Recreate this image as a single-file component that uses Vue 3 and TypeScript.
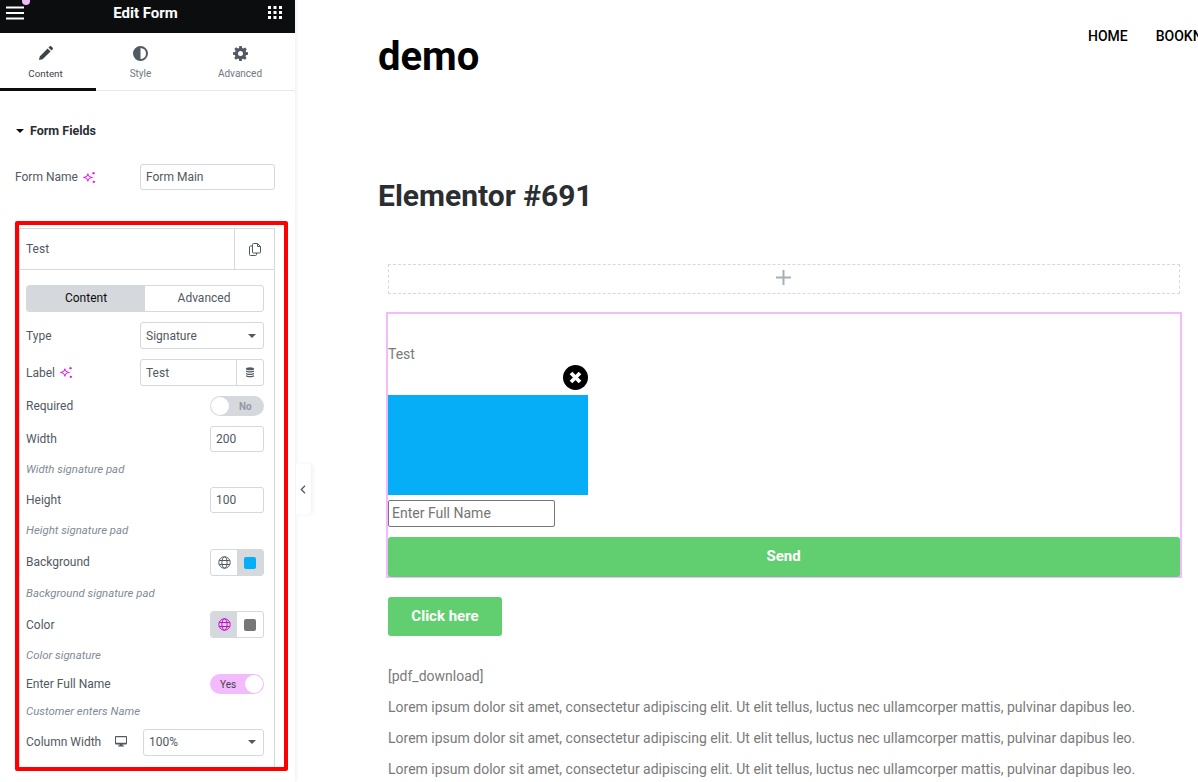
<script setup lang="ts">
const lorem = 'Lorem ipsum dolor sit amet, consectetur adipiscing elit. Ut elit tellus, luctus nec ullamcorper mattis, pulvinar dapibus leo.'
const lines: number[] = [1, 2, 3]
</script>

<template>
  <div class="app">
    <aside class="panel">
      <header class="top">
        <svg class="burger" width="18" height="14" viewBox="0 0 18 14"><path d="M0 1.500h18M0 7h18M0 12.500h18" stroke="#fff" stroke-width="2" /></svg>
        <span class="dot"></span>
        <span class="top-title">Edit Form</span>
        <svg class="grid-ic" width="14" height="13" viewBox="0 0 14 13" fill="#fff">
          <rect x="0" y="0" width="3" height="3" /><rect x="5.500" y="0" width="3" height="3" /><rect x="11" y="0" width="3" height="3" />
          <rect x="0" y="5" width="3" height="3" /><rect x="5.500" y="5" width="3" height="3" /><rect x="11" y="5" width="3" height="3" />
          <rect x="0" y="10" width="3" height="3" /><rect x="5.500" y="10" width="3" height="3" /><rect x="11" y="10" width="3" height="3" />
        </svg>
      </header>

      <nav class="tabs">
        <div class="tab tab-content active">
          <svg width="14" height="14" viewBox="0 0 14 14" fill="#3f444b"><path d="M0 14l.7-3.600L8.600 2.500l3 3L3.600 13.300zM9.500 1.600L10.800.3c.4-.4 1-.4 1.400 0l1.500 1.500c.4.4.4 1 0 1.400l-1.300 1.300z" /></svg>
          <span>Content</span>
        </div>
        <div class="tab tab-style">
          <svg width="15" height="15" viewBox="0 0 15 15"><circle cx="7.500" cy="7.500" r="6.500" fill="none" stroke="#515962" stroke-width="2" /><path d="M7.500 1a6.500 6.500 0 0 0 0 13z" fill="#515962" /></svg>
          <span>Style</span>
        </div>
        <div class="tab tab-adv">
          <svg width="15" height="15" viewBox="0 0 24 24" fill="#515962"><path fill-rule="evenodd" d="M10 0h4l.6 3.300 1.900.8 2.800-1.900 2.800 2.800-1.900 2.800.8 1.900L24 10v4l-3.300.6-.8 1.900 1.900 2.800-2.800 2.800-2.800-1.900-1.900.8L14 24h-4l-.6-3.300-1.900-.8-2.800 1.900-2.800-2.800 1.900-2.800-.8-1.900L0 14v-4l3.300-.6.8-1.900-1.900-2.800 2.800-2.800 2.800 1.900 1.900-.8zM12 8a4 4 0 1 0 0 8 4 4 0 0 0 0-8z" /></svg>
          <span>Advanced</span>
        </div>
      </nav>

      <section class="section">
        <h3 class="section-title"><span class="caret dark"></span>Form Fields</h3>
        <div class="form-name">
          <label class="lbl">Form Name
            <svg class="magic" width="13" height="13" viewBox="0 0 12 12"><path d="M4.500 2.500C4.900 4.800 5.400 5.300 8 6 5.400 6.700 4.900 7.200 4.500 9.500 4.100 7.200 3.600 6.700 1 6 3.600 5.300 4.100 4.800 4.500 2.500z" fill="none" stroke="#e01ff0" stroke-width="1" /><circle cx="9.700" cy="2" r="1.100" fill="#e01ff0" /><circle cx="10" cy="10" r="1.100" fill="#e01ff0" /></svg>
          </label>
          <div class="input name-input">Form Main</div>
        </div>

        <div class="highlight">
          <div class="repeater">
            <div class="rep-head">
              <span class="rep-title">Test</span>
              <span class="rep-copy">
                <svg width="12" height="13" viewBox="0 0 12 13" fill="none" stroke="#515962" stroke-width="1"><path d="M3.500 3H1.500a1 1 0 0 0-1 1v7.500a1 1 0 0 0 1 1h5a1 1 0 0 0 1-1V10" /><path d="M3.500 1.500a1 1 0 0 1 1-1h4l3 3v5.500a1 1 0 0 1-1 1h-6a1 1 0 0 1-1-1z" /><path d="M8.500.5v3h3" /></svg>
              </span>
            </div>
            <div class="rep-body">
              <div class="switch">
                <span class="switch-btn on">Content</span>
                <span class="switch-btn">Advanced</span>
              </div>

              <div class="row">
                <span class="lbl">Type</span>
                <div class="input select sel-type">Signature<span class="caret"></span></div>
              </div>

              <div class="row">
                <label class="lbl">Label
                  <svg class="magic" width="13" height="13" viewBox="0 0 12 12"><path d="M4.500 2.500C4.900 4.800 5.400 5.300 8 6 5.400 6.700 4.900 7.200 4.500 9.500 4.100 7.200 3.600 6.700 1 6 3.600 5.300 4.100 4.800 4.500 2.500z" fill="none" stroke="#e01ff0" stroke-width="1" /><circle cx="9.700" cy="2" r="1.100" fill="#e01ff0" /><circle cx="10" cy="10" r="1.100" fill="#e01ff0" /></svg>
                </label>
                <div class="label-group">
                  <span class="label-text">Test</span>
                  <span class="label-db">
                    <svg width="10" height="11" viewBox="0 0 10 11" fill="#515962"><ellipse cx="5" cy="1.700" rx="4" ry="1.500" /><path d="M1 3.500c1.500 1 6.500 1 8 0v1.300c-1.500 1-6.500 1-8 0zM1 6c1.500 1 6.500 1 8 0v1.300c-1.500 1-6.500 1-8 0zM1 8.300c1.500 1 6.500 1 8 0v.9c-1 1.400-7 1.400-8 0z" /></svg>
                  </span>
                </div>
              </div>

              <div class="row row-toggle">
                <span class="lbl">Required</span>
                <div class="toggle off"><span class="knob"></span><span class="toggle-txt">No</span></div>
              </div>

              <div class="row row-num">
                <span class="lbl">Width</span>
                <div class="input num">200</div>
              </div>
              <p class="desc after-1">Width signature pad</p>

              <div class="row row-num">
                <span class="lbl">Height</span>
                <div class="input num">100</div>
              </div>
              <p class="desc after-2">Height signature pad</p>

              <div class="row">
                <span class="lbl lift">Background</span>
                <div class="choice">
                  <span class="choice-btn">
                    <svg width="13" height="13" viewBox="0 0 13 13" fill="none" stroke="#515962" stroke-width="1"><circle cx="6.500" cy="6.500" r="5.700" /><ellipse cx="6.500" cy="6.500" rx="2.600" ry="5.700" /><path d="M1.200 4.500h10.600M1.200 8.500h10.600" /></svg>
                  </span>
                  <span class="choice-btn sel"><span class="swatch blue"></span></span>
                </div>
              </div>
              <p class="desc after-1">Background signature pad</p>

              <div class="row">
                <span class="lbl">Color</span>
                <div class="choice">
                  <span class="choice-btn sel">
                    <svg width="13" height="13" viewBox="0 0 13 13" fill="none" stroke="#d004d4" stroke-width="1"><circle cx="6.500" cy="6.500" r="5.700" /><ellipse cx="6.500" cy="6.500" rx="2.600" ry="5.700" /><path d="M1.200 4.500h10.600M1.200 8.500h10.600" /></svg>
                  </span>
                  <span class="choice-btn"><span class="swatch grey"></span></span>
                </div>
              </div>
              <p class="desc after-2">Color signature</p>

              <div class="row row-toggle">
                <span class="lbl">Enter Full Name</span>
                <div class="toggle on"><span class="toggle-txt">Yes</span><span class="knob"></span></div>
              </div>
              <p class="desc after-1">Customer enters Name</p>

              <div class="row">
                <span class="lbl lbl-col lift">Column Width
                  <svg width="12" height="11" viewBox="0 0 12 11" fill="#515962"><path fill-rule="evenodd" d="M1 0h10a1 1 0 0 1 1 1v6.500a1 1 0 0 1-1 1H7.500v1H9v1H3v-1h1.500v-1H1a1 1 0 0 1-1-1V1a1 1 0 0 1 1-1zm0 1.200v5.600h10V1.200z" /></svg>
                </span>
                <div class="input select sel-col">100%<span class="caret"></span></div>
              </div>
            </div>
          </div>
        </div>
      </section>
    </aside>

    <div class="collapse">
      <svg width="6" height="9" viewBox="0 0 6 9" fill="none" stroke="#515962" stroke-width="1.300"><path d="M5 .8L1.300 4.500 5 8.200" /></svg>
    </div>

    <main class="page">
      <div class="site-head">
        <div class="logo">demo</div>
        <div class="site-nav"><span>HOME</span><span>BOOKNOW</span></div>
      </div>
      <h1 class="page-title">Elementor #691</h1>

      <div class="content">
        <div class="add-zone">
          <svg width="15" height="15" viewBox="0 0 15 15"><path d="M7.500 0v15M0 7.500h15" stroke="#a4afb7" stroke-width="2" /></svg>
        </div>

        <div class="form-widget">
          <div class="f-label">Test</div>
          <div class="pad-close">
            <svg width="25" height="25" viewBox="0 0 25 25"><circle cx="12.500" cy="12.500" r="12.500" fill="#000" /><path d="M8 8l9 9M17 8l-9 9" stroke="#fff" stroke-width="3.800" /></svg>
          </div>
          <div class="pad"></div>
          <div class="full-name">Enter Full Name</div>
          <button class="send" type="button">Send</button>
        </div>

        <button class="click" type="button">Click here</button>

        <p class="para first">[pdf_download]</p>
        <p v-for="n in lines" :key="n" class="para">{{ lorem }}</p>
      </div>
    </main>
  </div>
</template>

<style>
html, body { margin: 0; height: 100%; overflow: hidden; background: #fff; }
</style>

<style scoped>
* { box-sizing: border-box; }
.app { display: flex; width: 1198px; height: 782px; overflow: hidden; position: relative; font-family: Roboto, "Liberation Sans", sans-serif; background: #fff; }
.panel { width: 295px; flex: none; height: 782px; overflow: hidden; background: #fff; box-shadow: 1px 0 4px rgba(0,0,0,.07); position: relative; }
.top { height: 33px; background: #0c0d0e; display: flex; align-items: center; justify-content: center; position: relative; }
.top-title { color: #fff; font-size: 15px; font-weight: 700; margin-top: -8px; margin-left: -4px; }
.burger { position: absolute; left: 6px; top: 6px; }
.dot { position: absolute; left: 22px; top: -3px; width: 8px; height: 8px; border-radius: 50%; background: #f0b9f9; }
.grid-ic { position: absolute; left: 268px; top: 6px; }
.tabs { height: 58px; display: flex; border-bottom: 1px solid #e6e8ea; }
.tab { display: flex; flex-direction: column; align-items: center; padding-top: 13px; gap: 6px; font-size: 10px; color: #6d7882; height: 58px; }
.tab span { line-height: 14px; }
.tab-content { width: 96px; color: #3f444b; padding-right: 5px; font-size: 9.800px; gap: 7px; }
.tab-style { width: 89px; }
.tab-adv { width: 110px; }
.tab.active { border-bottom: 3px solid #0c0d0e; }
.section { padding-left: 15px; }
.section-title { margin: 0; padding-top: 32px; height: 73px; font-size: 12.500px; font-weight: 700; color: #2b2e33; display: flex; align-items: flex-start; line-height: 15px; gap: 6px; padding-left: 1px; }
.section-title .caret { margin-top: 6px; }
.caret { width: 0; height: 0; border-left: 4px solid transparent; border-right: 4px solid transparent; border-top: 4px solid #515962; display: inline-block; }
.caret.dark { border-top-color: #0c0d0e; }
.form-name { display: flex; align-items: center; justify-content: space-between; width: 260px; height: 26px; }
.lbl { font-size: 12px; color: #515962; display: inline-flex; align-items: center; gap: 5px; }
.lift { padding-bottom: 2px; }
.lbl-col { gap: 14px; }
.input { border: 1px solid #d5d8dc; border-radius: 3px; font-size: 12px; color: #515962; display: flex; align-items: center; padding-left: 5px; background: #fff; }
.name-input { width: 135px; height: 26px; }
.highlight { margin-top: 31px; width: 273px; height: 550px; border: 4px solid #ff0000; border-radius: 2px; padding-top: 3px; overflow: hidden; }
.repeater { width: 256px; height: 540px; border: 1px solid #d5d8dc; border-bottom: 1px solid #c9ccd0; }
.rep-head { height: 41px; display: flex; border-bottom: 1px solid #d5d8dc; }
.rep-title { flex: 1; font-size: 12px; color: #515962; padding-left: 6px; line-height: 40px; }
.rep-copy { width: 40px; border-left: 1px solid #d5d8dc; display: flex; align-items: center; justify-content: center; }
.rep-body { padding: 15px 10px 0 6px; display: flex; flex-direction: column; gap: 10px; }
.switch { display: flex; height: 27px; border: 1px solid #d5d8dc; border-radius: 3px; overflow: hidden; font-size: 12px; color: #515962; line-height: 25px; }
.switch-btn { flex: 1; text-align: center; }
.switch-btn.on { background: #d5d8dc; color: #0c0d0e; flex: none; width: 118px; }
.row { display: flex; align-items: center; justify-content: space-between; height: 27px; }
.row-toggle { height: 20px; }
.row-num { height: 26px; }
.select { height: 27px; justify-content: space-between; padding-right: 7px; }
.sel-type { width: 124px; padding-left: 5px; }
.sel-col { width: 121px; padding-left: 5px; padding-bottom: 2px; }
.label-group { width: 124px; height: 27px; display: flex; border: 1px solid #d5d8dc; border-radius: 3px; font-size: 12px; color: #515962; }
.label-text { flex: 1; padding-left: 5px; line-height: 26px; }
.label-db { width: 27px; border-left: 1px solid #d5d8dc; display: flex; align-items: center; justify-content: center; }
.toggle { width: 54px; height: 20px; border-radius: 10px; display: flex; align-items: center; font-size: 10px; position: relative; }
.toggle.off { background: #d5d8dc; color: #9299a3; }
.toggle.off .toggle-txt { margin-left: 9px; font-weight: 700; }
.toggle.on { background: #f3bafd; color: #3f444b; justify-content: space-between; padding-left: 10px; }
.knob { width: 18px; height: 18px; margin: 0 1px; background: #fff; border-radius: 50%; display: block; }
.num { width: 54px; height: 26px; }
.desc { margin: 0; height: 14px; font-size: 11.400px; line-height: 14px; font-style: italic; color: #818a96; }
.after-1 { margin-bottom: 1px; }
.after-2 { margin-bottom: 2px; }
.choice { display: flex; width: 54px; height: 27px; border: 1px solid #d5d8dc; border-radius: 3px; overflow: hidden; }
.choice-btn { flex: 1; display: flex; align-items: center; justify-content: center; }
.choice-btn.sel { background: #d5d8dc; }
.swatch { width: 12px; height: 12px; border-radius: 2px; display: block; }
.swatch.blue { background: #06aef8; }
.swatch.grey { background: #777; }
.collapse { position: absolute; left: 296px; top: 464px; width: 15px; height: 50px; background: #fff; box-shadow: 2px 0 4px rgba(0,0,0,.06); display: flex; align-items: center; justify-content: center; border-radius: 0 3px 3px 0; padding-right: 2px; }
.page { flex: 1; min-width: 0; overflow: hidden; padding-left: 83px; }
.site-head { display: flex; height: 137px; white-space: nowrap; overflow: hidden; }
.logo { font-size: 40px; font-weight: 700; color: #000; line-height: 47px; margin-top: 33px; width: 710px; flex: none; }
.site-nav { display: flex; gap: 28px; font-size: 14px; font-weight: 500; color: #000; line-height: 16px; margin-top: 28px; }
.page-title { margin: 0; height: 127px; padding-top: 41px; font-size: 30px; line-height: 36px; font-weight: 700; color: #2b2e31; }
.content { padding-left: 10px; width: 802px; }
.add-zone { width: 792px; height: 30px; border: 1px dashed #d5d8dc; display: flex; align-items: center; justify-content: center; padding: 0 1px 3px 0; }
.form-widget { margin: 18px 0 0 -2px; width: 796px; height: 266px; border: 2px solid #f3bafd; position: relative; padding-top: 31px; }
.f-label { font-size: 14px; line-height: 18px; color: #7a7a7a; }
.pad-close { position: absolute; left: 175px; top: 51px; width: 25px; height: 25px; }
.pad-close svg { display: block; }
.pad { width: 200px; height: 100px; background: #06aef8; margin-top: 32px; }
.full-name { width: 167px; height: 27px; margin: 5px 0 0; border: 1px solid #767676; border-radius: 2px; font-size: 14px; line-height: 25px; color: #757575; padding-left: 3px; }
.send { display: block; margin-top: 10px; width: 792px; height: 40px; padding: 0 1px 2px 0; background: #61ce70; border: 0; border-radius: 3px; color: #fff; font: 700 15px Roboto, "Liberation Sans", sans-serif; }
.click { display: block; margin-top: 19px; width: 114px; height: 39px; padding: 0 0 2px; background: #61ce70; border: 0; border-radius: 3px; color: #fff; font: 700 15px Roboto, "Liberation Sans", sans-serif; }
.para { margin: 0; font-size: 14px; line-height: 21px; height: 31px; color: #7a7a7a; white-space: nowrap; }
.para.first { margin-top: 30px; }
</style>
